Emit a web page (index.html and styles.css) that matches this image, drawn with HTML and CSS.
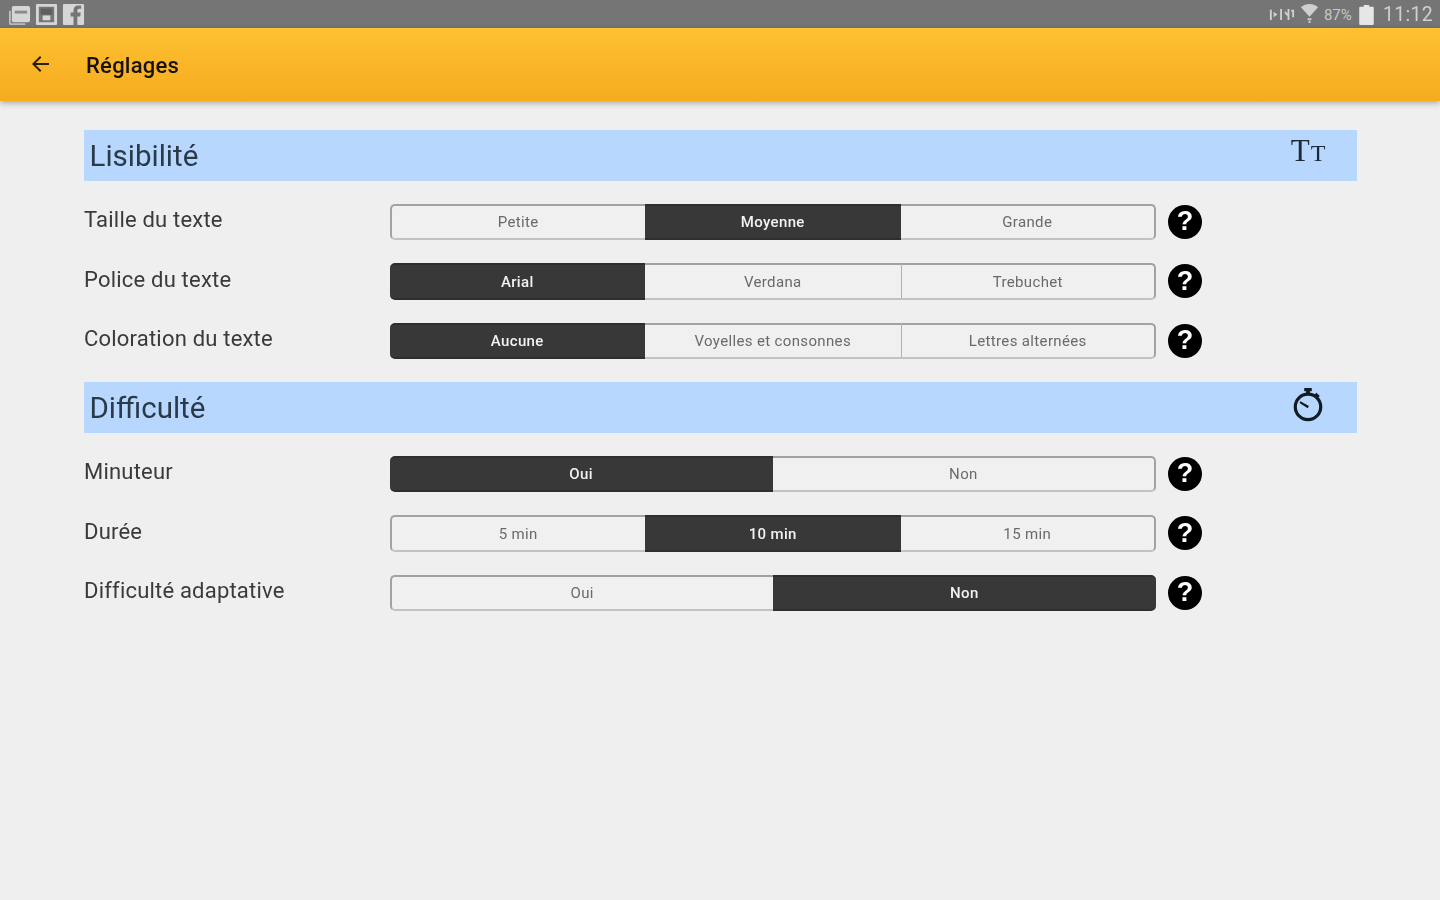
FILE: index.html
```html
<!DOCTYPE html>
<html lang="fr">
<head>
<meta charset="utf-8">
<title>Réglages</title>
<link rel="stylesheet" href="styles.css">
</head>
<body>
<div class="screen">
  <div class="status">
    <div class="status-left">
      <svg class="si" viewBox="0 0 24 24"><path d="M1 8h2v13h15v2H3a2 2 0 0 1-2-2z" opacity=".75"/><path d="M6 3h15a2 2 0 0 1 2 2v13a2 2 0 0 1-2 2H6a2 2 0 0 1-2-2V5a2 2 0 0 1 2-2z"/><path d="M7 8h13v3H7z" fill="#8a8a8a"/></svg>
      <svg class="si" viewBox="0 0 24 24"><path fill-rule="evenodd" d="M2 1h20a1 1 0 0 1 1 1v20a1 1 0 0 1-1 1H2a1 1 0 0 1-1-1V2a1 1 0 0 1 1-1zm2 3v16h16V4z"/><path d="M6 6h12v6H6z" fill="#5f5f5f"/><path d="M8 13h8v5H8z"/></svg>
      <svg class="si" viewBox="0 0 24 24"><path fill-rule="evenodd" d="M2 1h20a1 1 0 0 1 1 1v20a1 1 0 0 1-1 1h-6v-9h3l.5-4H16V8c0-1 .5-2 2-2h2V2.500h-3c-3 0-5 2-5 5V10H9v4h3v9H2a1 1 0 0 1-1-1V2a1 1 0 0 1 1-1z"/></svg>
    </div>
    <div class="status-right">
      <svg class="si-nfc" viewBox="0 0 28 18"><path d="M1 4h2v11H1zM5 6l4 3-4 3zM12 3h2v12h-2zM17 5l3 3V3h2v12h-2v-4l-3-3zM24 4h3v8h-2V6h-1z"/></svg>
      <svg class="si-wifi" viewBox="0 0 20 22"><path d="M10 1C6 1 3 2.500 1 4.500l9 10 9-10C17 2.500 14 1 10 1z"/><path d="M8 16h4v2H8zM9 19h2v2H9z"/></svg>
      <span class="pct">87%</span>
      <svg class="si-batt" viewBox="0 0 16 22"><path d="M5 0h6v2h4a1 1 0 0 1 1 1v18a1 1 0 0 1-1 1H1a1 1 0 0 1-1-1V3a1 1 0 0 1 1-1h4z"/></svg>
      <span class="time">11:12</span>
    </div>
  </div>
  <header class="appbar">
    <svg class="back" viewBox="0 0 24 24"><path d="M21 11H7.800l5.600-5.600L12 4l-8 8 8 8 1.400-1.400L7.800 13H21z"/></svg>
    <h1 class="title">Réglages</h1>
  </header>
  <main class="content">
    <section class="band">
      <h2>Lisibilité</h2>
      <div class="band-icon tt"><span class="big-t">T</span><span class="small-t">T</span></div>
    </section>
    <div class="row">
      <div class="label">Taille du texte</div>
      <div class="seg"><div class="opt">Petite</div><div class="opt on">Moyenne</div><div class="opt">Grande</div></div>
      <div class="help">?</div>
    </div>
    <div class="row">
      <div class="label">Police du texte</div>
      <div class="seg"><div class="opt on">Arial</div><div class="opt">Verdana</div><div class="opt">Trebuchet</div></div>
      <div class="help">?</div>
    </div>
    <div class="row">
      <div class="label">Coloration du texte</div>
      <div class="seg"><div class="opt on">Aucune</div><div class="opt">Voyelles et consonnes</div><div class="opt">Lettres alternées</div></div>
      <div class="help">?</div>
    </div>
    <section class="band">
      <h2>Difficulté</h2>
      <div class="band-icon">
        <svg class="watch" viewBox="0 0 34 38"><path d="M13 1h8v3.500h-2V7h-4V4.500h-2z"/><path d="M26 6l3.500 3.500-2.500 2.500-3.500-3.500z"/><circle cx="17" cy="21" r="13.500" fill="none" stroke="#111b22" stroke-width="3.400"/><path d="M9 15l9 5-1.300 2.500L8 17z"/></svg>
      </div>
    </section>
    <div class="row">
      <div class="label">Minuteur</div>
      <div class="seg"><div class="opt on">Oui</div><div class="opt">Non</div></div>
      <div class="help">?</div>
    </div>
    <div class="row">
      <div class="label">Durée</div>
      <div class="seg"><div class="opt">5 min</div><div class="opt on">10 min</div><div class="opt">15 min</div></div>
      <div class="help">?</div>
    </div>
    <div class="row">
      <div class="label">Difficulté adaptative</div>
      <div class="seg"><div class="opt">Oui</div><div class="opt on">Non</div></div>
      <div class="help">?</div>
    </div>
  </main>
</div>
</body>
</html>
```
FILE: styles.css
```css
* { box-sizing: border-box; }
html, body { margin: 0; height: 100%; overflow: hidden; }
body { background: #efefef; font-family: Roboto, "Liberation Sans", sans-serif; }
.screen { height: 900px; display: flex; flex-direction: column; filter: blur(0.7px); }

.status { height: 28px; background: #757575; display: flex; justify-content: space-between; align-items: center; padding: 0 7px 0 8px; flex: none; }
.status-left { display: flex; gap: 4px; align-items: center; }
.si { width: 23px; height: 23px; fill: #d6d6d6; }
.status-right { display: flex; align-items: center; color: #d8d8d8; padding-top: 1px; }
.si-nfc { width: 26px; height: 17px; fill: #d0d0d0; margin-right: 5px; }
.si-wifi { width: 19px; height: 21px; fill: #cfcfcf; margin-right: 5px; margin-top: -2px; }
.pct { font-size: 15px; width: 32px; margin-right: 2px; color: #c8c8c8; }
.si-batt { width: 17px; height: 20px; fill: #e6e6e6; margin-right: 8px; }
.time { font-size: 19.500px; letter-spacing: 0.3px; color: #cfcfcf; }

.appbar { height: 73px; flex: none; background: linear-gradient(#fdc131, #f7ab1f); box-shadow: 0 2px 6px rgba(0, 0, 0, .3); display: flex; align-items: center; padding-left: 28px; position: relative; }
.back { width: 24px; height: 24px; fill: #2a1f0a; margin-top: -1px; }
.title { margin: 2px 0 0 34px; font-size: 22px; font-weight: 500; letter-spacing: 0.25px; color: #16110a; }

.content { padding: 29px 83px 0 84px; display: flex; flex-direction: column; gap: 22.500px; }
.band { height: 51px; background: #b7d7fe; display: flex; justify-content: space-between; align-items: center; padding: 0 30px 0 5.500px; }
.band h2 { margin: 0; font-size: 29.500px; font-weight: 400; color: #2a3a4a; }
.band-icon { width: 38px; display: flex; justify-content: center; align-items: baseline; color: #1c2a38; margin-top: -6px; }
.tt { font-family: "Liberation Serif", serif; margin-top: -10px; }
.big-t { font-size: 31px; }
.small-t { font-size: 24px; margin-left: 1px; }
.watch { width: 32px; height: 36px; fill: #111b22; }

.row { height: 37px; display: flex; align-items: center; }
.label { width: 305.500px; font-size: 22px; letter-spacing: 0.2px; color: #3a3a3a; margin-top: -5px; flex: none; }
.seg { width: 766.500px; height: 36.500px; margin-top: -0.5px; display: grid; grid-auto-flow: column; grid-auto-columns: 1fr; flex: none; }
.opt { min-width: 0; display: flex; align-items: center; justify-content: center; padding-top: 1px; font-size: 15px; letter-spacing: 0.35px; color: #6a6a6a; background: #f0f0f0; border: 2px solid #a2a2a2; border-bottom-color: #c2c2c2; border-left: 0; border-right: 0; }
.opt:first-child { border-left: 2px solid #a2a2a2; border-radius: 5px 0 0 5px; }
.opt:last-child { border-right: 2px solid #a2a2a2; border-radius: 0 5px 5px 0; }
.opt + .opt { border-left: 1px solid #b0b0b0; }
.opt.on + .opt { border-left: 0; }
.opt.on { background: #383838; color: #f2f2f2; font-weight: 500; border: 0; border-top: 2px solid #2e2e2e; border-bottom: 2px solid #2e2e2e; }
.help { width: 34px; height: 34px; margin: -1px 0 0 12px; border-radius: 50%; background: #000; color: #fff; display: flex; align-items: center; justify-content: center; font-family: "Liberation Sans", sans-serif; font-size: 27px; font-weight: 700; flex: none; }
```
